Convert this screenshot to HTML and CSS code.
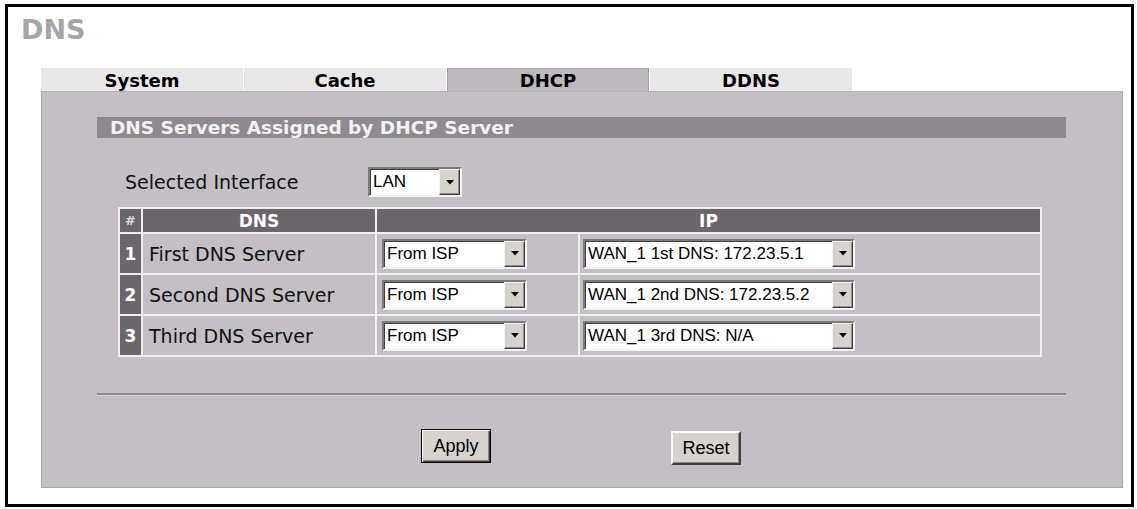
FILE: index.html
```html
<!DOCTYPE html>
<html lang="en">
<head>
<meta charset="utf-8">
<title>DNS</title>
<link rel="stylesheet" href="styles.css">
</head>
<body>
<div class="frame">
  <h1 class="title">DNS</h1>
  <div class="tabs">
    <div class="tab">System</div>
    <div class="tab">Cache</div>
    <div class="tab active">DHCP</div>
    <div class="tab">DDNS</div>
  </div>
  <div class="panel">
    <div class="section-bar">DNS Servers Assigned by DHCP Server</div>
    <div class="iface-row">
      <span class="iface-label">Selected Interface</span>
      <div class="combo combo-lan"><span class="combo-text">LAN</span><span class="combo-btn"><svg width="8" height="5" viewBox="0 0 8 5"><path d="M0 0H8L4 4.5Z" fill="#000"/></svg></span></div>
    </div>
    <table class="dns-table">
      <tr class="head">
        <th class="num hash">#</th>
        <th class="col-dns">DNS</th>
        <th colspan="2">IP</th>
      </tr>
      <tr>
        <td class="num">1</td>
        <td class="name">First DNS Server</td>
        <td class="c3"><div class="combo combo-src"><span class="combo-text">From ISP</span><span class="combo-btn"><svg width="8" height="5" viewBox="0 0 8 5"><path d="M0 0H8L4 4.5Z" fill="#000"/></svg></span></div></td>
        <td class="c4"><div class="combo combo-ip"><span class="combo-text">WAN_1 1st DNS: 172.23.5.1</span><span class="combo-btn"><svg width="8" height="5" viewBox="0 0 8 5"><path d="M0 0H8L4 4.5Z" fill="#000"/></svg></span></div></td>
      </tr>
      <tr>
        <td class="num">2</td>
        <td class="name">Second DNS Server</td>
        <td class="c3"><div class="combo combo-src"><span class="combo-text">From ISP</span><span class="combo-btn"><svg width="8" height="5" viewBox="0 0 8 5"><path d="M0 0H8L4 4.5Z" fill="#000"/></svg></span></div></td>
        <td class="c4"><div class="combo combo-ip"><span class="combo-text">WAN_1 2nd DNS: 172.23.5.2</span><span class="combo-btn"><svg width="8" height="5" viewBox="0 0 8 5"><path d="M0 0H8L4 4.5Z" fill="#000"/></svg></span></div></td>
      </tr>
      <tr>
        <td class="num">3</td>
        <td class="name">Third DNS Server</td>
        <td class="c3"><div class="combo combo-src"><span class="combo-text">From ISP</span><span class="combo-btn"><svg width="8" height="5" viewBox="0 0 8 5"><path d="M0 0H8L4 4.5Z" fill="#000"/></svg></span></div></td>
        <td class="c4"><div class="combo combo-ip"><span class="combo-text">WAN_1 3rd DNS: N/A</span><span class="combo-btn"><svg width="8" height="5" viewBox="0 0 8 5"><path d="M0 0H8L4 4.5Z" fill="#000"/></svg></span></div></td>
      </tr>
    </table>
    <div class="divider"></div>
    <div class="actions">
      <button class="btn btn-default" type="button">Apply</button>
      <button class="btn btn-reset" type="button">Reset</button>
    </div>
  </div>
</div>
</body>
</html>
```

FILE: styles.css
```css
* { box-sizing: border-box; }

body {
  margin: 0;
  background: #ffffff;
  font-family: "DejaVu Sans", Verdana, sans-serif;
  color: #111;
}

.frame {
  margin: 4px 0 0 5px;
  width: 1129px;
  height: 503px;
  border: 3px solid #000;
}

.title {
  margin: 8px 0 0 13px;
  height: 30px;
  font-size: 27px;
  line-height: 30px;
  font-weight: bold;
  color: #a5a5a5;
}

.tabs {
  display: flex;
  gap: 1px;
  margin: 23px 0 0 33px;
  height: 23px;
}

.tab {
  width: 202px;
  height: 23px;
  padding-top: 2px;
  background: #e8e8e8;
  font-size: 18px;
  line-height: 21px;
  font-weight: bold;
  text-align: center;
  color: #000;
}

.tab.active {
  background: #bdb9be;
  border: 1px solid #a6a2a7;
  border-bottom: none;
  padding-top: 1px;
}

.panel {
  margin-left: 33px;
  width: 1082px;
  height: 397px;
  padding-top: 25px;
  background: #c3bfc4;
  border: 1px solid #aca8ad;
  border-top-color: #b6b2b7;
}

.section-bar {
  margin-left: 55px;
  width: 969px;
  height: 21px;
  padding-left: 13px;
  background: #8f8a90;
  color: #f2f2f2;
  font-size: 18.5px;
  line-height: 21px;
  font-weight: bold;
  white-space: nowrap;
}

.iface-row {
  display: flex;
  align-items: center;
  margin: 29px 0 0 83px;
  height: 30px;
}

.iface-label {
  width: 243px;
  font-size: 19px;
}

.combo {
  display: flex;
  height: 30px;
  background: #fff;
  border: 2px solid;
  border-color: #7a7a7a #f4f4f4 #f4f4f4 #7a7a7a;
  box-shadow: inset 1px 1px #404040;
}

.combo-lan { width: 94px; }
.combo-src { width: 145px; }
.combo-ip { width: 272px; }

.combo-text {
  flex: 1;
  padding-left: 3px;
  font-family: "Liberation Sans", Arial, sans-serif;
  font-size: 17px;
  line-height: 26px;
  color: #000;
  white-space: nowrap;
  overflow: hidden;
}

.combo-btn {
  display: flex;
  align-items: center;
  justify-content: center;
  width: 21px;
  height: 26px;
  background: #d6d3ce;
  border: 1px solid;
  border-color: #f4f4f4 #404040 #404040 #f4f4f4;
  box-shadow: inset -1px -1px #8a8a8a;
}

.dns-table {
  margin: 10px 0 0 76px;
  border-collapse: separate;
  border-spacing: 2px;
  background: #efefef;
}

.dns-table th,
.dns-table td {
  padding: 0;
}

.dns-table th {
  height: 23px;
  background: #6b666c;
  color: #fff;
  font-size: 17px;
  font-weight: bold;
  text-align: center;
}

.dns-table td {
  height: 39px;
  background: #c3bfc4;
  vertical-align: middle;
}

.dns-table .num {
  width: 21px;
  background: #6b666c;
  color: #fff;
  font-size: 17px;
  font-weight: bold;
  text-align: center;
}

.dns-table .hash {
  font-size: 13px;
  color: #dcdcdc;
}

.dns-table .col-dns { width: 232px; }

.dns-table .name {
  width: 232px;
  padding-left: 6px;
  font-size: 19px;
  color: #111;
}

.dns-table .c3 {
  width: 201px;
  padding-left: 5px;
}

.dns-table .c4 {
  width: 460px;
  padding-left: 3px;
}

.divider {
  margin: 36px 0 0 55px;
  width: 969px;
  border-top: 2px solid #8d898e;
  border-bottom: 1px solid #d6d3d7;
}

.actions {
  display: flex;
  align-items: flex-start;
  margin: 33px 0 0 379px;
}

.btn {
  width: 70px;
  height: 34px;
  padding: 0;
  background: #d6d3ce;
  border: 2px solid;
  border-color: #fafafa #404040 #404040 #fafafa;
  box-shadow: inset -1px -1px #858585;
  font-family: "Liberation Sans", Arial, sans-serif;
  font-size: 18px;
  color: #000;
}

.btn-default {
  border: 1px solid #000;
  box-shadow: inset 1px 1px #fafafa, inset -1px -1px #404040, inset -2px -2px #858585;
}

.btn-reset {
  margin: 2px 0 0 180px;
}
```
